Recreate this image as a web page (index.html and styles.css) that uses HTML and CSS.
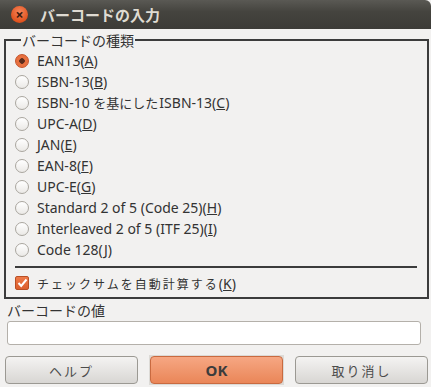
FILE: index.html
```html
<!DOCTYPE html>
<html>
<head>
    <title>バーコードの入力</title>
    <meta charset="UTF-8">
    <link rel="stylesheet" href="styles.css">
</head>
<body>
    <div class="window">
        <div class="titlebar">
            <span class="close">&times;</span>
            <span class="title">バーコードの入力</span>
        </div>

        <div class="content">
            <fieldset class="frame">
                <legend>バーコードの種類</legend>
                <div class="radio-list">
                    <div class="radio selected"><span class="dot"></span><span>EAN13(<u>A</u>)</span></div>
                    <div class="radio"><span class="dot"></span><span>ISBN-13(<u>B</u>)</span></div>
                    <div class="radio"><span class="dot"></span><span>ISBN-10 <span class="jp">を基にした</span>ISBN-13(<u>C</u>)</span></div>
                    <div class="radio"><span class="dot"></span><span>UPC-A(<u>D</u>)</span></div>
                    <div class="radio"><span class="dot"></span><span>JAN(<u>E</u>)</span></div>
                    <div class="radio"><span class="dot"></span><span>EAN-8(<u>F</u>)</span></div>
                    <div class="radio"><span class="dot"></span><span>UPC-E(<u>G</u>)</span></div>
                    <div class="radio"><span class="dot"></span><span>Standard 2 of 5 (Code 25)(<u>H</u>)</span></div>
                    <div class="radio"><span class="dot"></span><span>Interleaved 2 of 5 (ITF 25)(<u>I</u>)</span></div>
                    <div class="radio"><span class="dot"></span><span>Code 128(<u>J</u>)</span></div>
                </div>
                <div class="separator"></div>
                <div class="check">
                    <span class="box">
                        <svg width="11" height="10" viewBox="0 0 11 10"><path d="M1.5 5 L4.2 8 L9.5 1.5" fill="none" stroke="#fff" stroke-width="2"/></svg>
                    </span>
                    <span><span class="jp-small">チェックサムを自動計算する</span>(<u>K</u>)</span>
                </div>
            </fieldset>

            <div class="value-label">バーコードの値</div>
            <div class="entry"></div>

            <div class="buttons">
                <div class="btn">ヘルプ</div>
                <div class="btn-default"><div class="btn ok">OK</div></div>
                <div class="btn">取り消し</div>
            </div>
        </div>
    </div>
</body>
</html>
```

FILE: styles.css
```css
body {
    margin: 0;
    background: #f2f1f0;
    font-family: "Noto Sans", "Noto Sans CJK JP", sans-serif;
    font-size: 14px;
    color: #333;
}
.window {
    width: 431px;
    height: 387px;
    overflow: hidden;
}
.titlebar {
    height: 29px;
    background: linear-gradient(#5a5954, #45443f 40%, #3c3b37);
    border-top-right-radius: 6px;
    display: flex;
    align-items: center;
    padding-left: 11px;
}
.close {
    width: 17px;
    height: 17px;
    border-radius: 50%;
    background: radial-gradient(circle at 50% 35%, #f7855a, #e0531f 70%, #b8401a);
    color: #3a1a0e;
    font-size: 14px;
    line-height: 17px;
    text-align: center;
    font-weight: bold;
}
.title {
    margin-left: 12px;
    color: #dfdbd2;
    font-size: 15px;
    font-weight: bold;
    font-family: "Noto Sans CJK JP", sans-serif;
}
.content {
    padding: 2px 2px 0 4px;
}
.frame {
    margin: 0;
    border: 2px solid #3c3c3c;
    padding: 0 10px 4px 9px;
}
.frame legend {
    padding: 0 1px;
    margin-left: 6px;
    font-family: "Noto Sans CJK JP", sans-serif;
    font-size: 14px;
    line-height: 18px;
}
.radio-list {
    display: flex;
    flex-direction: column;
    padding-top: 1px;
}
.radio {
    height: 21px;
    display: flex;
    align-items: center;
    white-space: nowrap;
}
.radio .dot {
    width: 14px;
    height: 14px;
    border: 1px solid #aaa69f;
    border-radius: 50%;
    background: linear-gradient(#ffffff, #ebe9e6);
    margin-right: 8px;
    box-sizing: border-box;
    flex: none;
}
.radio.selected .dot {
    border-color: #c4532a;
    background: radial-gradient(circle, #5b2c1c 0 2.5px, #e8703f 3px);
}
.jp {
    font-family: "Noto Sans CJK JP", sans-serif;
    font-size: 13px;
    margin-right: 1px;
}
.separator {
    height: 2px;
    background: #3c3c3c;
    margin: 6px 0 5px 0;
}
.check {
    display: flex;
    align-items: center;
    height: 20px;
}
.check .box {
    width: 14px;
    height: 14px;
    border-radius: 2px;
    background: linear-gradient(#ee7a48, #dc5f2e);
    border: 1px solid #b94f24;
    box-sizing: border-box;
    margin-right: 8px;
    display: flex;
    align-items: center;
    justify-content: center;
}
.jp-small {
    font-family: "Noto Sans CJK JP", sans-serif;
    font-size: 12px;
    letter-spacing: 2px;
}
.value-label {
    font-family: "Noto Sans CJK JP", sans-serif;
    margin: 2px 0 0 3px;
    line-height: 18px;
}
.entry {
    margin: 2px 8px 0 3px;
    height: 24px;
    background: #fff;
    border: 1px solid #b4b0aa;
    border-radius: 3px;
    box-sizing: border-box;
}
.buttons {
    display: flex;
    justify-content: space-between;
    margin: 11px 1px 0 1px;
}
.btn {
    width: 133px;
    height: 28px;
    box-sizing: border-box;
    border: 1px solid #9b9993;
    border-radius: 4px;
    background: linear-gradient(#f4f3f2, #d8d6d3);
    display: flex;
    align-items: center;
    justify-content: center;
    font-family: "Noto Sans CJK JP", sans-serif;
    font-size: 13px;
    color: #4c4c4c;
    letter-spacing: 2px;
}
.btn-default {
    background: #dcdad6;
    padding: 0 1px;
    margin-top: -1px;
    height: 30px;
    display: flex;
    align-items: center;
}
.btn.ok {
    background: linear-gradient(#f6a783, #ea8658);
    border-color: #c96a40;
    color: #3c3c3c;
    font-family: "Noto Sans", sans-serif;
    font-size: 15px;
    font-weight: bold;
    letter-spacing: 0;
}
```
